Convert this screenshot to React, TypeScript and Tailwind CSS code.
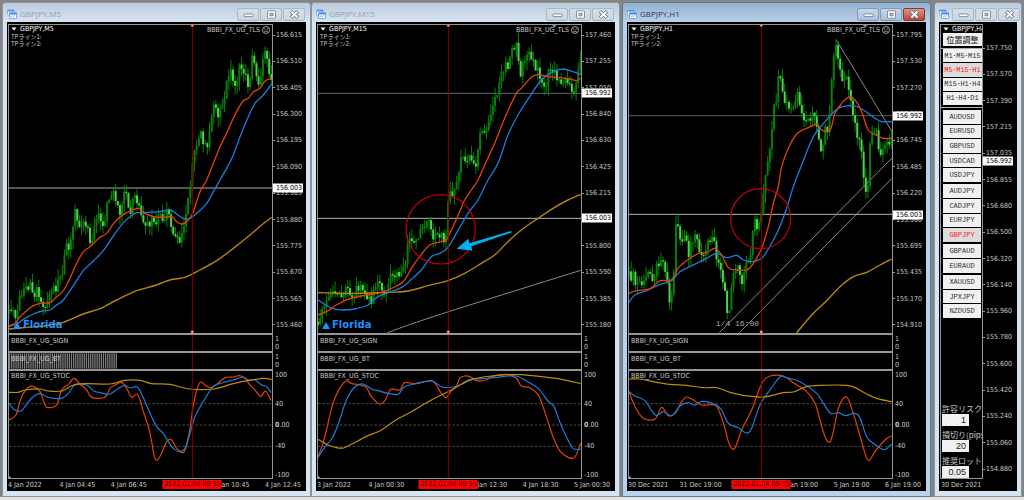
import React from "react";
import clsx from "clsx";

type Point = [number, number];

interface ChartData {
  title: string;
  active?: boolean;
  x0: number; // left edge of the plot, 3 units per pixel
  cursor: number;
  price: number[];
  red: number[];
  blue: number[];
  gold: number[];
  trend: number[][];
  levels: { y: number; color: string }[];
  tags: { y: number; text: string }[];
  circle?: { x: number; y: number; r: number };
  arrow?: boolean;
  brand?: boolean;
  note?: string;
  bars?: boolean;
  stoc: { red: number[]; blue: number[]; gold: number[] };
  scale: string[];
  times: string[];
}

const PLOT_W = 789;
const PLOT_H = 924;
const PLOT_TOP = 75;
const STEP = 6.4;

const charts: ChartData[] = [
  {
    title: "GBPJPY,M5",
    x0: 27,
    cursor: 577,
    price: [27,940, 33,935, 42,930, 50,960, 58,895, 70,870, 80,870, 88,895, 93,835, 100,895, 110,875, 120,885, 130,925, 140,910, 150,880, 158,860, 168,865, 180,830, 190,825, 195,745, 205,740, 215,720, 220,655, 226,625, 234,675, 250,660, 262,685, 272,725, 282,685, 292,645, 302,670, 315,675, 322,600, 332,580, 340,575, 350,603, 360,635, 370,575, 380,590, 388,640, 398,610, 408,580, 416,620, 428,655, 434,690, 444,670, 455,665, 468,680, 478,645, 490,660, 505,630, 514,680, 525,710, 538,720, 545,705, 552,675, 560,625, 570,575, 577,490, 583,450, 595,430, 602,385, 612,440, 624,445, 632,380, 642,310, 655,355, 664,325, 675,300, 681,230, 695,215, 707,270, 716,195, 728,200, 738,240, 744,265, 752,225, 759,158, 768,240, 778,245, 786,195, 796,145, 805,200, 814,225],
    red: [27,978, 45,970, 60,950, 80,932, 95,920, 120,910, 150,908, 170,890, 190,872, 210,835, 230,790, 250,755, 270,740, 300,712, 320,700, 345,665, 375,640, 395,632, 415,625, 430,638, 460,650, 490,652, 515,650, 530,665, 545,672, 560,665, 578,640, 600,575, 620,540, 640,490, 660,440, 680,400, 695,365, 715,325, 730,302, 745,295, 760,275, 780,265, 795,243, 815,236],
    blue: [27,980, 50,972, 75,955, 100,942, 125,933, 150,930, 170,915, 190,900, 220,857, 250,812, 280,783, 310,752, 340,708, 370,668, 390,650, 410,638, 440,637, 480,635, 510,630, 530,642, 550,655, 570,655, 590,640, 620,610, 640,575, 660,540, 680,505, 700,465, 720,410, 745,350, 765,310, 790,285, 815,252],
    gold: [27,987, 80,982, 130,978, 190,967, 250,942, 300,926, 350,900, 410,872, 460,858, 510,840, 555,832, 600,810, 650,782, 700,745, 750,705, 785,675, 815,652],
    trend: [],
    levels: [{ y: 564, color: "#a8a8a8" }],
    tags: [{ y: 565, text: "156.003" }],
    brand: true,
    bars: true,
    stoc: {
      red: [27,285, 48,270, 58,235, 70,205, 85,187, 100,184, 120,200, 135,240, 145,248, 170,240, 185,195, 205,178, 222,160, 240,177, 260,195, 275,217, 315,217, 330,190, 350,178, 365,172, 380,190, 395,217, 410,207, 420,225, 430,260, 445,305, 455,350, 463,395, 472,405, 485,385, 500,350, 515,345, 530,370, 547,383, 557,370, 570,310, 580,240, 592,190, 602,171, 615,180, 630,188, 650,178, 675,158, 700,156, 718,152, 735,160, 750,180, 765,195, 782,214, 797,198, 813,226],
      blue: [27,235, 45,255, 65,257, 80,237, 100,215, 120,205, 140,216, 165,220, 185,220, 205,205, 225,180, 260,180, 280,197, 310,205, 330,207, 355,190, 375,181, 390,189, 412,186, 430,218, 450,265, 470,305, 490,325, 505,350, 520,370, 540,380, 555,370, 570,325, 585,275, 610,230, 640,185, 680,170, 700,165, 730,156, 745,165, 765,165, 785,180, 800,185, 813,203],
      gold: [27,202, 55,202, 75,195, 120,192, 145,198, 185,198, 220,180, 260,176, 330,177, 375,166, 420,166, 455,176, 510,178, 570,192, 640,192, 700,176, 760,164, 795,160, 815,164],
    },
    scale: ["156.615", "156.510", "156.405", "156.300", "156.195", "156.090", "155.985", "155.880", "155.775", "155.670", "155.565", "155.460"],
    times: ["4 Jan 2022", "4 Jan 04:45", "4 Jan 06:45", "4 Jan 08:45", "4 Jan 10:45", "4 Jan 12:45"],
  },
  {
    title: "GBPJPY,M15",
    x0: 30,
    cursor: 421,
    price: [30,965, 38,960, 46,915, 58,905, 70,895, 84,870, 94,895, 104,875, 110,877, 117,845, 125,885, 135,895, 146,860, 160,865, 170,880, 175,903, 190,900, 197,875, 204,845, 214,845, 224,865, 234,880, 242,845, 254,815, 268,820, 278,835, 286,805, 293,785, 300,735, 306,710, 316,715, 322,730, 330,710, 340,675, 352,665, 364,670, 372,700, 382,715, 397,695, 408,725, 414,705, 420,615, 428,575, 440,580, 452,525, 460,475, 470,478, 480,475, 492,480, 505,495, 512,435, 520,375, 532,410, 540,360, 550,350, 560,290, 570,280, 577,225, 588,210, 595,170, 602,245, 608,140, 616,170, 626,125, 636,240, 646,190, 656,175, 664,155, 672,180, 684,205, 692,210, 702,250, 714,252, 722,220, 730,210, 740,225, 750,255, 760,240, 772,240, 782,250, 795,265, 806,250, 812,215, 818,185],
    red: [30,945, 55,935, 85,915, 120,898, 160,888, 210,880, 240,870, 285,845, 310,805, 335,770, 365,735, 400,725, 415,720, 435,680, 455,635, 470,600, 490,570, 510,540, 530,495, 560,430, 590,355, 625,280, 640,265, 670,232, 690,224, 720,230, 750,232, 785,237, 805,242, 818,234],
    blue: [30,900, 45,910, 75,926, 105,930, 140,927, 180,915, 210,890, 250,875, 285,860, 310,838, 340,810, 370,770, 395,760, 420,742, 445,700, 480,640, 510,600, 540,540, 570,490, 600,405, 630,345, 665,290, 700,240, 735,215, 765,207, 795,215, 818,224],
    gold: [30,878, 150,880, 240,877, 300,873, 360,857, 420,842, 470,820, 520,790, 560,765, 600,725, 640,690, 690,655, 740,622, 780,600, 818,583],
    trend: [[238,998, 400,942, 818,811]],
    levels: [{ y: 280, color: "#5c6670" }, { y: 655, color: "#b4b4b4" }],
    tags: [{ y: 280, text: "156.992" }, { y: 655, text: "156.003" }],
    circle: { x: 398, y: 688, r: 104 },
    arrow: true,
    brand: true,
    stoc: {
      red: [30,395, 45,355, 60,295, 75,235, 95,190, 115,168, 130,175, 155,180, 175,187, 190,215, 215,237, 232,225, 248,193, 275,195, 290,173, 320,176, 350,170, 372,167, 385,180, 400,205, 415,218, 428,200, 445,185, 455,160, 470,153, 490,157, 505,167, 535,165, 550,155, 595,148, 625,160, 640,183, 665,188, 690,208, 705,245, 720,290, 735,335, 755,377, 780,397, 800,397, 818,355],
      blue: [30,397, 50,367, 75,335, 95,285, 115,225, 140,186, 165,177, 190,192, 210,197, 240,205, 270,208, 290,185, 330,175, 372,168, 405,187, 450,183, 480,165, 520,161, 560,158, 600,153, 625,153, 650,165, 690,190, 720,228, 738,245, 755,290, 775,335, 795,370, 818,373],
      gold: [30,343, 60,360, 85,368, 107,369, 130,358, 180,332, 215,318, 260,287, 310,260, 370,225, 420,200, 460,178, 500,161, 550,153, 600,149, 640,149, 700,155, 760,163, 818,176],
    },
    scale: ["157.460", "157.255", "157.050", "156.840", "156.630", "156.425", "156.215", "156.010", "155.800", "155.590", "155.385", "155.180"],
    times: ["3 Jan 2022", "4 Jan 00:30", "4 Jan 06:30", "4 Jan 12:30", "4 Jan 18:30", "5 Jan 00:30"],
  },
  {
    title: "GBPJPY,H1",
    active: true,
    x0: 27,
    cursor: 424,
    price: [27,825, 32,850, 40,815, 48,855, 60,850, 75,845, 85,830, 100,840, 110,805, 124,770, 132,795, 140,825, 148,910, 156,870, 162,815, 167,660, 176,695, 184,735, 194,710, 206,760, 216,720, 228,700, 238,745, 250,765, 260,740, 270,715, 279,690, 285,745, 292,795, 302,815, 312,855, 320,935, 326,945, 332,865, 340,825, 352,790, 360,815, 368,845, 376,805, 388,775, 396,725, 404,660, 412,675, 420,675, 426,615, 434,555, 440,505, 444,490, 450,430, 456,400, 462,320, 470,310, 476,225, 484,250, 494,300, 504,325, 515,320, 525,310, 534,275, 540,310, 548,360, 558,355, 570,370, 580,325, 590,380, 600,445, 606,455, 614,390, 626,405, 632,290, 640,180, 646,135, 650,150, 658,200, 664,245, 675,245, 682,225, 690,300, 700,340, 708,390, 718,420, 728,460, 732,545, 738,595, 744,560, 750,430, 758,405, 768,395, 778,450, 786,460, 796,430, 806,425, 814,400],
    red: [27,880, 50,872, 90,866, 120,842, 150,842, 165,825, 175,803, 200,782, 235,760, 260,758, 285,745, 305,765, 325,803, 345,809, 380,810, 400,790, 425,745, 445,680, 460,610, 475,560, 485,500, 505,445, 530,402, 560,385, 590,373, 605,390, 630,390, 645,340, 665,310, 685,292, 705,300, 725,335, 745,390, 775,408, 790,415, 815,415],
    blue: [27,907, 45,885, 80,872, 120,853, 155,842, 180,815, 230,790, 265,772, 290,760, 320,773, 350,766, 370,780, 395,785, 425,775, 450,738, 475,690, 500,625, 520,560, 545,495, 580,410, 615,365, 655,325, 700,317, 730,330, 765,355, 785,365, 815,365],
    gold: [530,998, 580,940, 620,902, 660,860, 700,830, 740,817, 780,795, 815,777],
    trend: [[298,998, 816,474], [358,998, 816,535], [648,118, 816,395]],
    levels: [{ y: 347, color: "#565c60" }, { y: 643, color: "#b4b4b4" }],
    tags: [{ y: 347, text: "156.992" }, { y: 645, text: "156.003" }],
    circle: { x: 422, y: 656, r: 90 },
    note: "1/4 16:00",
    stoc: {
      red: [27,200, 45,245, 70,280, 105,282, 125,247, 145,272, 165,265, 185,230, 200,216, 220,225, 245,240, 285,240, 300,265, 315,310, 325,350, 337,372, 347,365, 365,315, 395,255, 415,200, 430,168, 450,153, 490,153, 520,173, 560,200, 585,235, 600,285, 615,335, 629,352, 640,320, 655,250, 678,215, 695,250, 715,315, 735,385, 747,407, 765,380, 795,345, 815,332],
      blue: [27,200, 45,213, 75,227, 95,257, 110,272, 130,260, 155,272, 180,243, 205,233, 225,241, 245,229, 285,238, 305,255, 325,295, 355,308, 378,324, 395,310, 420,240, 450,195, 480,156, 500,158, 540,170, 590,205, 610,235, 632,265, 655,263, 678,272, 700,265, 718,275, 740,335, 760,355, 785,372, 797,373, 815,357],
      gold: [27,162, 60,162, 100,170, 150,178, 200,181, 250,188, 290,188, 330,202, 370,211, 430,216, 490,203, 520,201, 560,185, 600,181, 680,181, 710,190, 740,207, 770,220, 815,230],
    },
    scale: ["157.795", "157.530", "157.270", "157.005", "156.745", "156.485", "156.220", "155.960", "155.695", "155.435", "155.170", "154.910"],
    times: ["30 Dec 2021", "31 Dec 19:00", "3 Jan 19:00", "4 Jan 19:00", "5 Jan 19:00", "6 Jan 19:00"],
  },
];

const h4Scale = ["157.750", "157.570", "157.390", "157.215", "157.035", "156.855", "156.680", "156.500", "156.320", "156.140", "155.960", "155.780", "155.600", "155.420", "155.240", "155.060", "154.880"];

const layouts = ["M1･M5･M15", "M5･M15･H1", "M15･H1･H4", "H1･H4･D1"];

const pairGroups = [
  { height: "h-[72px]", pairs: ["AUDUSD", "EURUSD", "GBPUSD", "USDCAD", "USDJPY"] },
  { height: "h-[58px]", pairs: ["AUDJPY", "CADJPY", "EURJPY", "GBPJPY"] },
  { height: "h-[29px]", pairs: ["GBPAUD", "EURAUD"] },
  { height: "h-[43px]", pairs: ["XAUUSD", "JPXJPY", "NZDUSD"] },
];

const riskFields = [
  { id: "risk", label: "許容リスク", value: "1" },
  { id: "stop", label: "損切り(pips)", value: "20" },
  { id: "lot", label: "推奨ロット", value: "0.05" },
];

function toPoints(flat: number[]): Point[] {
  const out: Point[] = [];
  for (let i = 0; i < flat.length; i += 2) out.push([flat[i], flat[i + 1]]);
  return out;
}

function valueAt(points: Point[], x: number) {
  for (let i = 1; i < points.length; i++) {
    const [x1, y1] = points[i - 1];
    const [x2, y2] = points[i];
    if (x <= x2) return y1 + ((y2 - y1) * (x - x1)) / (x2 - x1);
  }
  return points[points.length - 1][1];
}

// Catmull-Rom spline through all points
function smoothPath(flat: number[]) {
  const p = toPoints(flat);
  let d = `M${p[0][0]} ${p[0][1]}`;
  for (let i = 0; i < p.length - 1; i++) {
    const a = p[Math.max(i - 1, 0)];
    const b = p[i];
    const c = p[i + 1];
    const e = p[Math.min(i + 2, p.length - 1)];
    d += `C${b[0] + (c[0] - a[0]) / 6} ${b[1] + (c[1] - a[1]) / 6} ${c[0] - (e[0] - b[0]) / 6} ${c[1] - (e[1] - b[1]) / 6} ${c[0]} ${c[1]}`;
  }
  return d;
}

// repeatable pseudo random number between 0 and 1
function noise(n: number) {
  const v = Math.sin(n * 127.1) * 43758.5453;
  return v - Math.floor(v);
}

function Candles({ price, x0 }: { price: number[]; x0: number }) {
  const points = toPoints(price);
  let open = valueAt(points, x0);
  const items = [];
  for (let i = 0; i < 124; i++) {
    const x = x0 + i * STEP;
    const close = valueAt(points, x) + (noise(i + x0) - 0.5) * 30;
    const top = Math.min(open, close);
    const bottom = Math.max(open, close);
    const high = top - noise(i + 300) * 30;
    const low = bottom + noise(i + 700) * 30;
    const up = close < open;
    items.push(
      <g key={i}>
        <rect x={x - 1.3} y={high} width={2.6} height={low - high} fill="#009400" />
        <rect x={x - 3} y={top} width={6} height={Math.max(bottom - top, 3)} fill={up ? "#088008" : "#52d052"} />
      </g>
    );
    open = close;
  }
  return <g>{items}</g>;
}

function Line({ data, color, width = 1.2 }: { data: number[]; color: string; width?: number }) {
  return <path d={smoothPath(data)} fill="none" stroke={color} strokeWidth={width} strokeLinejoin="round" vectorEffect="non-scaling-stroke" />;
}

function WindowIcon() {
  return (
    <svg viewBox="0 0 12 12" className="w-[10px] h-[10px] shrink-0">
      <rect x="0.5" y="0.5" width="8" height="7" rx="1" fill="#f4f9ff" stroke="#6fa6e6" />
      <path d="M0.5 2.2h8" stroke="#4d8fe0" strokeWidth="1.8" />
      <rect x="3" y="4" width="8.5" height="7.5" rx="1" fill="#f4f9ff" stroke="#5a98e4" />
      <path d="M3 5.6h8.5" stroke="#3f86de" strokeWidth="1.8" />
      <path d="M4.5 10l1.6-2 1.5 1.4 2-2" fill="none" stroke="#7fb2ee" />
    </svg>
  );
}

function WindowButton({ kind, active }: { kind: "Minimize" | "Maximize" | "Close"; active?: boolean }) {
  const danger = active && kind === "Close";
  return (
    <button
      aria-label={kind}
      className={clsx(
        "w-[22px] h-[13px] shrink-0 rounded-xs border flex items-center justify-center",
        danger ? "border-[#7c3a34] bg-linear-to-b from-[#d99a8e] to-[#c0402c]" : active ? "border-[#8099b5] bg-linear-to-b from-[#c5d7ea] to-[#a9c2dd]" : "border-[#a9b8c8] bg-linear-to-b from-[#d3dfea] to-[#c9d7e4]"
      )}
    >
      <svg viewBox="0 0 11 9" className="w-[11px] h-[9px]">
        {kind === "Minimize" && <rect x="1" y="4" width="9" height="2.6" rx="0.5" fill="#fff" stroke="#6c7884" strokeWidth="0.8" />}
        {kind === "Maximize" && (
          <>
            <rect x="1.5" y="0.8" width="8" height="7.4" rx="0.5" fill="#fff" stroke="#6c7884" strokeWidth="0.8" />
            <rect x="4" y="3.2" width="3" height="2.6" fill="#b9c9d9" stroke="#6c7884" strokeWidth="0.8" />
          </>
        )}
        {kind === "Close" && (
          <>
            <path d="M2 1.2l7 6.6M9 1.2L2 7.8" stroke="#5f6a76" strokeWidth="3.4" />
            <path d="M2.4 1.6l6.2 5.8M8.6 1.6L2.4 7.4" stroke="#fff" strokeWidth="2" />
          </>
        )}
      </svg>
    </button>
  );
}

function ChartWindow({ title, active, className, children }: { title?: string; active?: boolean; className: string; children: React.ReactNode }) {
  return (
    <section
      className={clsx(
        "min-w-0 flex flex-col rounded-t border px-1 pb-[5px]",
        active ? "border-[#4f8296] bg-[#b9d1ea]" : "border-[#8b949c] bg-[#d7e4f1]",
        className
      )}
    >
      <header
        className={clsx(
          "-mx-1 h-[19px] flex items-center gap-px rounded-t bg-linear-to-b",
          title ? "pl-1 pr-[5px] pt-[3px]" : "pl-1 pr-px pt-[3px]",
          active ? "from-[#94b0cf] to-[#b9d1ea]" : "from-[#bccbdb] to-[#d7e4f1]"
        )}
      >
        <WindowIcon />
        {title ? (
          <h2 className={clsx("flex-1 truncate pl-0.5 font-['Open_Sans',sans-serif] text-[8px] leading-[12px]", active ? "text-[#2c3640]" : "text-[#97a1ab]")}>{title}</h2>
        ) : (
          <div className="flex-1" />
        )}
        <WindowButton kind="Minimize" active={active} />
        <WindowButton kind="Maximize" active={active} />
        <WindowButton kind="Close" active={active} />
      </header>
      <div className="flex-1 bg-black pt-0.5 overflow-hidden">{children}</div>
    </section>
  );
}

function PriceTag({ text, top }: { text: string; top: number }) {
  return (
    <span className="absolute left-0 -translate-y-1/2 w-[30px] h-[9px] pl-[3px] bg-white text-black leading-[9px]" style={{ top: `${top}%` }}>
      {text}
    </span>
  );
}

function ScaleLabels({ labels }: { labels: string[] }) {
  return (
    <>
      {labels.map((label) => (
        <span key={label} className="flex items-center gap-px">
          <i className="w-0.5 h-px bg-[#9a9a9a]" />
          {label}
        </span>
      ))}
    </>
  );
}

function Cursor({ x, top, height }: { x: number; top: number; height: number }) {
  return <rect x={x - 1.5} y={top} width={3} height={height} fill="#8e0000" />;
}

function SmallPane({ name, chart, bars }: { name: string; chart: ChartData; bars?: boolean }) {
  return (
    <>
      <div className="relative h-[18px] border-x border-b-2 border-[#959595]">
        <svg viewBox={`${chart.x0} 0 ${PLOT_W} 48`} preserveAspectRatio="none" className="block w-full h-full">
          {bars && Array.from({ length: 51 }, (_, i) => <rect key={i} x={chart.x0 + i * STEP} y={1} width={3.8} height={46} fill="#808080" />)}
          <Cursor x={chart.cursor} top={0} height={48} />
        </svg>
        <span className="absolute left-0.5 top-0.5">{name}</span>
      </div>
      <div className="pl-0.5">
        <p>1</p>
        <p>0</p>
      </div>
    </>
  );
}

function Chart({ chart }: { chart: ChartData }) {
  const { x0, cursor, stoc } = chart;
  return (
    <div className="pl-px font-['DejaVu_Sans_Condensed','DejaVu_Sans',sans-serif] text-[7px] leading-[8px] text-[#c8c8c8]">
      <div className="grid grid-cols-[minmax(0,1fr)_33px]">
        {/* Price */}
        <div className="relative border-x border-t border-b-2 border-[#959595]">
          <svg viewBox={`${x0} ${PLOT_TOP} ${PLOT_W} ${PLOT_H}`} preserveAspectRatio="none" className="block w-full h-[308px]">
            {chart.levels.map((l) => (
              <rect key={l.y} x={x0} y={l.y - 1.5} width={PLOT_W} height={3} fill={l.color} />
            ))}
            {chart.trend.map((t, i) => (
              <Line key={i} data={t} color="#8a8a8a" width={1} />
            ))}
            <Candles price={chart.price} x0={x0} />
            <Line data={chart.gold} color="#b8860b" width={1.4} />
            <Line data={chart.blue} color="#1c7cdc" width={1.3} />
            <Line data={chart.red} color="#e64008" width={1.3} />
            <Cursor x={cursor} top={PLOT_TOP} height={PLOT_H} />
            <rect x={cursor - 4} y={PLOT_TOP - 3} width={8} height={8} fill="#ffb0b0" stroke="#e00000" strokeWidth={2} />
            <rect x={cursor - 4} y={PLOT_TOP + PLOT_H - 7} width={8} height={8} fill="#ffb0b0" stroke="#e00000" strokeWidth={2} />
            <path d={`M${x0 + 702} 75h14l-7 8z`} fill="#7d8ea0" />
            {chart.circle && <circle cx={chart.circle.x} cy={chart.circle.y} r={chart.circle.r} fill="none" stroke="#c00010" strokeWidth={3.6} />}
            {chart.arrow && <path d="M446 746L481 716L484 730L609 693L612 697L490 739L493 752Z" fill="#00b0f0" />}
          </svg>
          <div className="absolute left-0.5 top-0">
            <h3 className="flex items-center gap-[3px] text-white">
              <svg viewBox="0 0 6 4" className="w-[6px] h-[4px]">
                <path d="M0.5 0.5h5L3 3.5z" fill="#fff" />
              </svg>
              {chart.title}
            </h3>
            <p className="font-['Noto_Sans_CJK_JP',sans-serif] text-[6px] leading-[7px]">TPライン1:</p>
            <p className="font-['Noto_Sans_CJK_JP',sans-serif] text-[6px] leading-[7px]">TPライン2:</p>
          </div>
          <div className="absolute right-0.5 top-px flex items-center gap-0.5">
            BBBI_FX_UG_TLS
            <svg viewBox="0 0 8 8" className="w-[8px] h-[8px]" fill="none" stroke="#c8c8c8" strokeWidth="0.8">
              <circle cx="4" cy="4" r="3.5" />
              <path d="M2 2.6l1.3 0.8M6 2.6l-1.3 0.8M2.2 6q1.8-2.2 3.6 0" />
            </svg>
          </div>
          {chart.brand && (
            <div className="absolute left-1 bottom-0.5 flex items-center gap-0.5 font-['DejaVu_Sans',sans-serif] text-[10px] leading-[12px] font-bold text-[#1e90ff]">
              <svg viewBox="0 0 8 7" className="w-[8px] h-[7px]">
                <path d="M4 0l4 7H0z" fill="#1e90ff" />
              </svg>
              Florida
            </div>
          )}
          {chart.note && <span className="absolute left-[33%] bottom-1 font-['Liberation_Mono',monospace] text-[8px] leading-[10px] text-[#a8a8a8]">{chart.note}</span>}
        </div>
        <div className="relative flex flex-col justify-between pt-[7px] pb-1.5">
          <ScaleLabels labels={chart.scale} />
          {chart.tags.map((t) => (
            <PriceTag key={t.text} text={t.text} top={((t.y - PLOT_TOP + 3) / (PLOT_H + 9)) * 100} />
          ))}
        </div>

        <SmallPane name="BBBI_FX_UG_SIGN" chart={chart} />
        <SmallPane name="BBBI_FX_UG_BT" chart={chart} bars={chart.bars} />

        {/* Stochastic */}
        <div className="relative border-x border-b border-[#959595]">
          <svg viewBox={`${x0} 138 ${PLOT_W} 321`} preserveAspectRatio="none" className="block w-full h-[107px]">
            {[236, 300, 364].map((y) => (
              <path key={y} d={`M${x0} ${y}h${PLOT_W}`} stroke="#5a5a5a" strokeWidth={2.4} strokeDasharray="8 5" />
            ))}
            <Line data={stoc.red} color="#e64008" />
            <Line data={stoc.blue} color="#1c7cdc" />
            <Line data={stoc.gold} color="#bc8c10" />
            <Cursor x={cursor} top={138} height={321} />
            <path d={`M${x0} 452l7 7h-7z`} fill="#8ea4bc" />
          </svg>
          <span className="absolute left-0.5 top-px">BBBI_FX_UG_STOC</span>
        </div>
        <div className="flex flex-col justify-between pl-0.5">
          <span>100</span>
          <div className="flex flex-col gap-[13px]">
            <span>40</span>
            <span>
              <b>0</b>.00
            </span>
            <span>-40</span>
          </div>
          <span>-100</span>
        </div>
      </div>

      {/* Time axis */}
      <div className="relative -ml-px h-3 pt-0.5 flex whitespace-nowrap">
        {chart.times.map((t, i) => (
          <span key={t} className={clsx("pl-px", i < 5 ? "flex-1 min-w-0" : "w-[42px]")}>
            {t}
          </span>
        ))}
        <span
          className="absolute top-px -translate-x-1/2 h-[9px] w-[59px] bg-[#ff0000] text-center leading-[9px] text-[#400000]"
          style={{ left: `${(((cursor - x0) / 3 + 2) / 299) * 100}%` }}
        >
          2022.01.04 09:55
        </span>
      </div>
    </div>
  );
}

function PanelButton({ text, selected }: { text: string; selected?: boolean }) {
  return (
    <button
      className={clsx(
        "flex-1 min-h-0 w-full flex items-center justify-center overflow-hidden whitespace-nowrap font-['Liberation_Mono','Noto_Sans_CJK_JP',monospace] text-[7px] leading-[8px]",
        selected ? "bg-[#dcdcdc] text-[#ff2020]" : "bg-[#f0f0f0] text-[#303030]"
      )}
    >
      {text}
    </button>
  );
}

function TradePanel() {
  return (
    <div className="h-full flex flex-col font-['DejaVu_Sans_Condensed','DejaVu_Sans',sans-serif] text-[7px] leading-[8px] text-[#c8c8c8]">
      <div className="flex-1 flex pl-px">
        <div className="w-[43px] shrink-0 flex flex-col border border-[#959595] overflow-hidden">
          <h3 className="flex items-center gap-[3px] pl-0.5 text-white whitespace-nowrap">
            <svg viewBox="0 0 6 4" className="w-[6px] h-[4px] shrink-0">
              <path d="M0.5 0.5h5L3 3.5z" fill="#fff" />
            </svg>
            GBPJPY,H4
          </h3>
          <div className="pl-0.5 pb-0.5">
            <button className="w-full h-[13px] flex items-center justify-center whitespace-nowrap bg-[#f0f0f0] text-[#303030] font-['Noto_Sans_CJK_JP',sans-serif] text-[8px] leading-[12px] font-medium">位置調整</button>
          </div>
          <div className="h-[60px] pl-0.5 pb-0.5 flex flex-col gap-px border-y border-[#b0b0b0]">
            {layouts.map((text) => (
              <PanelButton key={text} text={text} selected={text === "M5･M15･H1"} />
            ))}
          </div>
          <div className="pl-0.5 pt-0.5 pr-px flex flex-col gap-0.5">
            {pairGroups.map((group) => (
              <div key={group.height} className={clsx("flex flex-col gap-px", group.height)}>
                {group.pairs.map((pair) => (
                  <PanelButton key={pair} text={pair} selected={pair === "GBPJPY"} />
                ))}
              </div>
            ))}
          </div>
          <form className="mt-auto pl-px flex flex-col gap-1">
            {riskFields.map((field) => (
              <div key={field.id}>
                <label htmlFor={field.id} className="block whitespace-nowrap font-['Noto_Sans_CJK_JP',sans-serif] text-[8px] leading-[10px]">
                  {field.label}
                </label>
                <input id={field.id} defaultValue={field.value} className="block w-[27px] h-3 pr-[3px] bg-[#f0f0f0] text-right text-[#202020] font-['Liberation_Sans',sans-serif] text-[9px] leading-[12px]" />
              </div>
            ))}
          </form>
        </div>
        <div className="relative flex-1 flex flex-col justify-between pt-5 pb-1.5">
          <ScaleLabels labels={h4Scale} />
          <PriceTag text="156.992" top={30} />
        </div>
      </div>
      <p className="h-3 pt-0.5 pl-0.5 whitespace-nowrap">30 Dec 2021</p>
    </div>
  );
}

export default function App() {
  return (
    <main className="bg-[#e6e3e4] pb-[3px]">
      <div className="flex bg-[#858585] px-0.5 pt-0.5">
        {charts.map((chart) => (
          <ChartWindow key={chart.title} title={chart.title} active={chart.active} className={chart.active ? "flex-1 ml-0.5 mr-[3px]" : "flex-1"}>
            <Chart chart={chart} />
          </ChartWindow>
        ))}
        <ChartWindow className="w-[88px] shrink-0">
          <TradePanel />
        </ChartWindow>
      </div>
    </main>
  );
}
